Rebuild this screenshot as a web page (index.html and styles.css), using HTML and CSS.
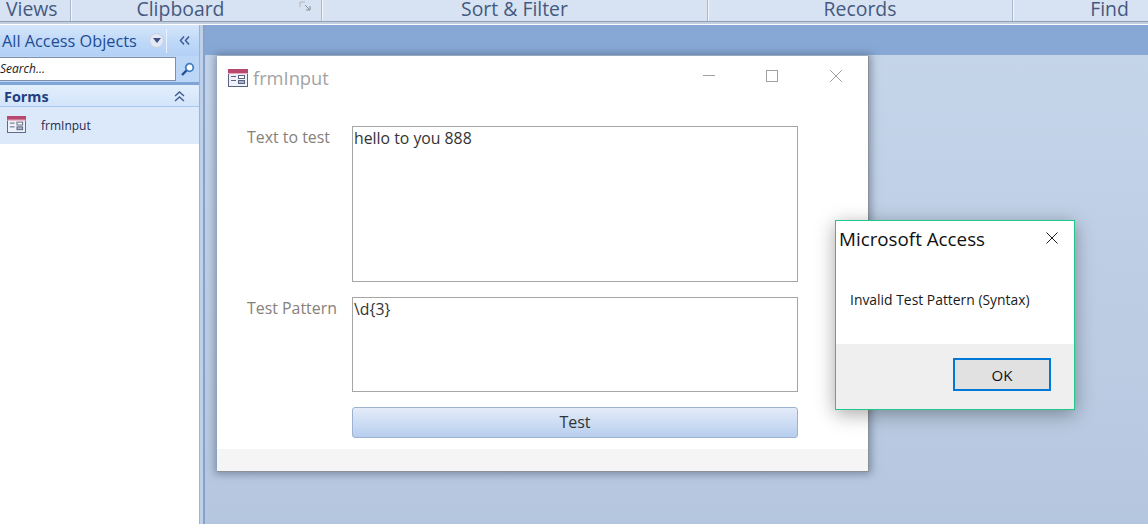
FILE: index.html
```html
<!DOCTYPE html>
<html lang="en">
<head>
    <meta charset="UTF-8">
    <title>frmInput</title>
    <link rel="stylesheet" href="styles.css">
</head>
<body>
    <svg class="defs" width="0" height="0">
        <symbol id="form-icon" viewBox="0 0 20 18">
            <rect x="0.5" y="0.5" width="19" height="17" fill="#eef1f7" stroke="#5a6482"/>
            <rect x="0" y="0" width="20" height="4" fill="#b8486e"/>
            <rect x="0" y="4" width="20" height="1" fill="#e8a8bc"/>
            <rect x="3" y="7" width="5" height="1" fill="#5a6482"/>
            <rect x="3" y="11" width="5" height="1" fill="#5a6482"/>
            <rect x="10.5" y="6.5" width="6" height="3" fill="#fff" stroke="#5a6482"/>
            <rect x="10.5" y="11.5" width="6" height="3" fill="#a9b4cc" stroke="#5a6482"/>
        </symbol>
    </svg>

    <header class="ribbon">
        <div class="group group-views">Views</div>
        <div class="group group-clipboard">
            <span class="group-label">Clipboard</span>
            <svg class="launcher" width="14" height="12" viewBox="0 0 14 12">
                <path d="M1 1h5M1 1v5" stroke="#b4b4b4" fill="none"/>
                <path d="M6 4l5 5M11 5v4H7" stroke="#8c8c8c" fill="none"/>
            </svg>
        </div>
        <div class="group group-sort">Sort &amp; Filter</div>
        <div class="group group-records">Records</div>
        <div class="group group-find">Find</div>
    </header>

    <div class="app-body">
        <nav class="nav-pane">
            <div class="nav-head">
                <span class="nav-title">All Access Objects</span>
                <span class="nav-drop">
                    <svg width="8" height="6" viewBox="0 0 8 6"><path d="M0 0h8L4 5z" fill="#3d4f86"/></svg>
                </span>
                <span class="nav-sep"></span>
                <svg class="nav-chevrons" width="11" height="9" viewBox="0 0 11 9">
                    <path d="M5 0.5L1.5 4.5 5 8.5M10 0.5L6.5 4.5 10 8.5" stroke="#3d5c92" stroke-width="1.5" fill="none"/>
                </svg>
            </div>
            <div class="nav-search">
                <div class="search-box">Search...</div>
                <svg class="search-icon" width="15" height="15" viewBox="0 0 15 15">
                    <circle cx="9.5" cy="5.5" r="3.8" fill="#fff" stroke="#3f7fc4" stroke-width="1.8"/>
                    <path d="M6.5 8.5L2 13" stroke="#234f92" stroke-width="2.4"/>
                </svg>
            </div>
            <div class="nav-section">
                <span>Forms</span>
                <svg width="11" height="11" viewBox="0 0 11 11">
                    <path d="M1 5L5.5 1 10 5M1 10L5.5 6 10 10" stroke="#3d5c92" stroke-width="1.4" fill="none"/>
                </svg>
            </div>
            <div class="nav-item">
                <svg class="nav-item-icon" width="19" height="17"><use href="#form-icon"/></svg>
                <span>frmInput</span>
            </div>
        </nav>
        <div class="splitter"></div>
        <main class="workspace">
            <div class="workspace-band"></div>

            <section class="form-window">
                <div class="form-title">
                    <svg class="form-title-icon" width="20" height="18"><use href="#form-icon"/></svg>
                    <span class="form-title-text">frmInput</span>
                    <svg class="win-btn btn-min" width="14" height="14" viewBox="0 0 14 14">
                        <path d="M1 6.5h12" stroke="#a0a0a0"/>
                    </svg>
                    <svg class="win-btn btn-max" width="14" height="14" viewBox="0 0 14 14">
                        <rect x="1.5" y="1.5" width="11" height="11" fill="none" stroke="#a0a0a0"/>
                    </svg>
                    <svg class="win-btn btn-close" width="14" height="14" viewBox="0 0 14 14">
                        <path d="M1 1l12 12M13 1L1 13" stroke="#a0a0a0"/>
                    </svg>
                </div>
                <div class="form-fields">
                    <label class="field-label">Text to test</label>
                    <div class="field field-text">hello to you 888</div>
                    <label class="field-label">Test Pattern</label>
                    <div class="field field-pattern">\d{3}</div>
                    <button class="test-button">Test</button>
                </div>
                <div class="form-footer"></div>
            </section>

            <section class="dialog">
                <div class="dialog-title">
                    <span>Microsoft Access</span>
                    <svg class="dialog-close" width="14" height="14" viewBox="0 0 14 14">
                        <path d="M1.5 1.5l11 11M12.5 1.5l-11 11" stroke="#1a1a1a" fill="none"/>
                    </svg>
                </div>
                <p class="dialog-message">Invalid Test Pattern (Syntax)</p>
                <div class="dialog-footer">
                    <button class="ok-button">OK</button>
                </div>
            </section>
        </main>
    </div>
</body>
</html>
```

FILE: styles.css
```css
html, body {
    height: 100%;
}
body {
    margin: 0;
    display: flex;
    flex-direction: column;
    overflow: hidden;
    background: #fff;
    font-family: "Open Sans", "Noto Sans", sans-serif;
}
.defs {
    position: absolute;
}

/* ribbon, only the group captions are in view */
.ribbon {
    display: flex;
    flex: none;
    height: 21px;
    overflow: hidden;
    background: #d7e3f2;
    border-bottom: 1px solid #8f9fb8;
    box-shadow: 0 1px 0 #c3cfdf, 0 2px 0 #c3cfdf;
    color: #45597f;
    font-size: 19.4px;
    line-height: 18px;
}
.group {
    position: relative;
    display: flex;
    justify-content: center;
    border-right: 1px solid #a8b8cf;
    box-shadow: 1px 0 0 #f2f6fb;
    box-sizing: border-box;
}
.group-views {
    width: 71px;
    justify-content: flex-start;
    padding-left: 6px;
}
.group-clipboard {
    width: 251px;
    padding-right: 31px;
}
.group-sort {
    width: 386px;
}
.group-records {
    width: 305px;
}
.group-find {
    flex: 1;
    padding-left: 58px;
    border-right: 0;
    box-shadow: none;
}
.launcher {
    position: absolute;
    right: 8px;
    top: 1px;
}

.app-body {
    display: flex;
    flex: 1;
    margin-top: 3px;
    min-height: 0;
}

/* navigation pane */
.nav-pane {
    flex: none;
    width: 199px;
    background: #fff;
}
.nav-head {
    display: flex;
    align-items: center;
    height: 31px;
    padding: 0 0 0 2px;
    box-sizing: border-box;
    background: linear-gradient(#d5e6fb, #bcd7f8 60%, #b3d0f5);
    color: #1e4c94;
    font-size: 16.3px;
}
.nav-title {
    width: 147px;
    white-space: nowrap;
}
.nav-drop {
    display: flex;
    align-items: center;
    justify-content: center;
    width: 15px;
    height: 15px;
    border-radius: 50%;
    background: #e3e8f4;
    border: 1px solid #c3cfe0;
    box-sizing: border-box;
}
.nav-sep {
    width: 1px;
    height: 24px;
    margin-left: 2px;
    background: #eaf2fd;
}
.nav-chevrons {
    margin-left: 12px;
}
.nav-search {
    display: flex;
    align-items: center;
    height: 26px;
    background: #bcd6f7;
    border-bottom: 3px solid #7fa5d6;
}
.search-box {
    width: 176px;
    height: 24px;
    line-height: 22px;
    box-sizing: border-box;
    background: #fff;
    border: 1px solid #7f8fa9;
    border-left: 0;
    font-size: 12px;
    font-style: italic;
    color: #1a1a1a;
}
.search-icon {
    margin-left: 4px;
}
.nav-section {
    display: flex;
    align-items: center;
    justify-content: space-between;
    height: 22px;
    padding: 1px 14px 0 4px;
    box-sizing: border-box;
    background: linear-gradient(#e2eefc, #d3e4fa);
    border-bottom: 1px solid #a6c8f2;
    color: #1e3f80;
    font-size: 14.4px;
    font-weight: 700;
}
.nav-item {
    display: flex;
    align-items: center;
    height: 37px;
    background: #dce9fb;
    color: #1f2c4d;
    font-size: 12px;
}
.nav-item-icon {
    margin: 0 15px 3px 7px;
}

.splitter {
    flex: none;
    width: 6px;
    box-sizing: border-box;
    background: #bed1e9;
    border-left: 1px solid #9fb3cf;
    border-right: 2px solid #86a3cd;
}

/* workspace and floating windows */
.workspace {
    position: relative;
    flex: 1;
    background: linear-gradient(#c6d5ea, #b5c7df);
}
.workspace-band {
    height: 30px;
    background: #87a8d5;
}
.form-window {
    position: absolute;
    left: 12px;
    top: 31px;
    width: 652px;
    height: 416px;
    display: flex;
    flex-direction: column;
    box-sizing: border-box;
    background: #fff;
    border-right: 1px solid #8b8f96;
    border-bottom: 1px solid #8b8f96;
    box-shadow: 0 0 8px 2px rgba(70, 85, 110, 0.55);
}
.form-title {
    position: relative;
    display: flex;
    align-items: center;
    height: 44px;
    padding-left: 11px;
}
.form-title-text {
    margin: 0 0 2px 5px;
    color: #a3a3a3;
    font-size: 18.3px;
}
.win-btn {
    position: absolute;
    top: 13px;
}
.btn-min {
    left: 485px;
}
.btn-max {
    left: 548px;
}
.btn-close {
    left: 612px;
}
.form-fields {
    display: grid;
    flex: 1;
    grid-template-columns: 446px;
    grid-template-rows: 156px 95px 31px;
    row-gap: 15px;
    justify-content: start;
    padding: 26px 0 0 135px;
    position: relative;
}
.field-label {
    position: absolute;
    left: 30px;
    color: #85817c;
    font-size: 15.9px;
}
.field-label:nth-of-type(1) {
    top: 26px;
}
.field-label:nth-of-type(2) {
    top: 197px;
}
.field {
    box-sizing: border-box;
    border: 1px solid #a6a6a6;
    padding: 1px;
    color: #333;
    font-size: 15.8px;
    line-height: 20px;
}
.test-button {
    padding: 0 0 2px;
    font-family: inherit;
    font-size: 16px;
    color: #333;
    background: linear-gradient(#e4ecf9, #b7ceee);
    border: 1px solid #9db2d0;
    border-radius: 3px;
}
.form-footer {
    height: 22px;
    background: #f5f5f5;
}

.dialog {
    position: absolute;
    left: 630px;
    top: 195px;
    width: 240px;
    height: 190px;
    display: flex;
    flex-direction: column;
    box-sizing: border-box;
    background: #fff;
    border: 1px solid #1fc98a;
    box-shadow: 0 4px 18px rgba(0, 0, 0, 0.35);
}
.dialog-title {
    display: flex;
    align-items: center;
    justify-content: space-between;
    height: 36px;
    padding: 0 15px 0 3px;
    color: #111;
    font-size: 18.8px;
}
.dialog-close {
    margin-bottom: 3px;
}
.dialog-message {
    flex: 1;
    margin: 0;
    padding: 33px 0 0 14px;
    color: #1a1a1a;
    font-size: 13.9px;
}
.dialog-footer {
    display: flex;
    justify-content: flex-end;
    height: 65px;
    padding: 14px 23px 0 0;
    box-sizing: border-box;
    background: #efefef;
}
.ok-button {
    width: 98px;
    height: 33px;
    padding: 0;
    font-family: inherit;
    font-size: 15px;
    color: #111;
    background: #e1e1e1;
    border: 2px solid #0078d7;
}
```
